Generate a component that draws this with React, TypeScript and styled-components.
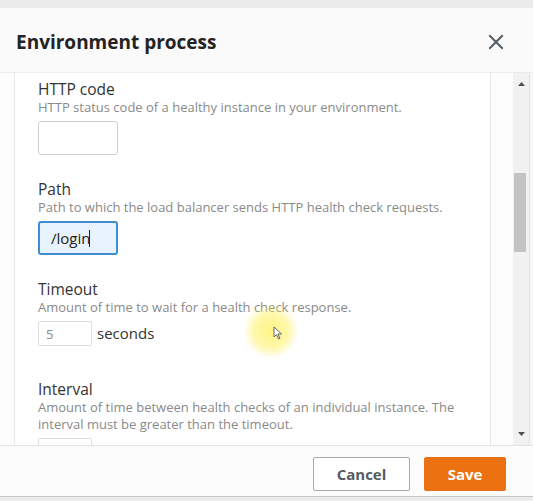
import React from "react";
import styled, { createGlobalStyle } from "styled-components";

const Global = createGlobalStyle`
  html, body { margin: 0; padding: 0; background: #ececec; }
  body { font-family: "Open Sans", "Liberation Sans", sans-serif; }
  * { box-sizing: border-box; }
`;

const Page = styled.div`
  width: 533px;
  height: 501px;
  padding-top: 8px;
  background: #ececec;
  position: relative;
  overflow: hidden;
`;

const Modal = styled.div`
  height: 489px;
  background: #ffffff;
  display: flex;
  flex-direction: column;
  border-bottom: 1px solid #c9c9c9;
`;

const Header = styled.div`
  height: 65px;
  flex: none;
  background: #fafafa;
  display: flex;
  align-items: center;
  justify-content: space-between;
  padding: 3px 28px 0 16px;
  border-bottom: 1px solid #ececec;
`;

const Title = styled.h1`
  margin: 0;
  font-size: 19px;
  font-weight: 700;
  color: #232323;
`;

const CloseButton = styled.button`
  border: none;
  background: none;
  padding: 0;
  width: 18px;
  height: 18px;
  display: flex;
  align-items: center;
  justify-content: center;
  cursor: pointer;
`;

const BodyRow = styled.div`
  flex: 1;
  display: flex;
  min-height: 0;
`;

const Gutter = styled.div<{ $w: number }>`
  width: ${(p) => p.$w}px;
  flex: none;
  background: #fdfdfd;
`;

const Panel = styled.div`
  width: 477px;
  flex: none;
  border-left: 1px solid #e8e8e8;
  border-right: 1px solid #e8e8e8;
  padding: 6px 24px 0 23px;
  overflow: hidden;
  display: flex;
  flex-direction: column;
  gap: 24px;
  background: #fff;
`;

const Field = styled.div`
  display: flex;
  flex-direction: column;
`;

const Label = styled.div`
  font-size: 15.5px;
  line-height: 20px;
  color: #333;
`;

const Desc = styled.div`
  font-size: 13px;
  line-height: 17px;
  color: #8a8a8a;
  margin-bottom: 5px;
`;

const TextInput = styled.div<{ $focused?: boolean }>`
  width: 80px;
  height: 34px;
  border-radius: 3px;
  border: ${(p) => (p.$focused ? "2px solid #3f8fd0" : "1px solid #cfcfcf")};
  background: ${(p) => (p.$focused ? "#e9f3fd" : "#fff")};
  display: flex;
  align-items: center;
  padding-left: ${(p) => (p.$focused ? "11px" : "12px")};
  font-size: 15px;
  color: #222;
`;

const Caret = styled.span`
  display: inline-block;
  width: 1px;
  height: 17px;
  background: #222;
  margin-left: -1px;
`;

const NumberRow = styled.div`
  display: flex;
  align-items: flex-start;
  height: 34px;
  gap: 5px;
`;

const NumberInput = styled.div`
  width: 54px;
  height: 25px;
  border: 1px solid #dedede;
  border-radius: 2px;
  font-size: 13px;
  color: #888;
  padding-left: 7px;
  display: flex;
  align-items: center;
`;

const Unit = styled.span`
  font-size: 15px;
  line-height: 25px;
  color: #333;
`;

const ScrollTrack = styled.div`
  width: 16px;
  flex: none;
  background: #f1f1f1;
  display: flex;
  flex-direction: column;
  align-items: center;
  padding: 8px 0 8px;
`;

const Arrow = styled.div`
  height: 6px;
  display: flex;
  align-items: center;
  justify-content: center;
  width: 100%;
`;

const Thumb = styled.div`
  width: 12px;
  height: 79px;
  background: #c3c3c3;
  margin: 86px 3px 0 1px;
  align-self: flex-start;
`;

const TrackSpacer = styled.div`
  flex: 1;
`;

const Edge = styled.div`
  flex: 1;
  background: #f7f7f7;
  border-left: 1px solid #e4e4e4;
`;

const Footer = styled.div`
  height: 51px;
  flex: none;
  border-top: 1px solid #e4e4e4;
  background: #fcfcfc;
  display: flex;
  justify-content: flex-end;
  align-items: flex-start;
  padding: 11px 27px 0 0;
  gap: 14px;
`;

const Button = styled.button<{ $primary?: boolean }>`
  height: 34px;
  width: ${(p) => (p.$primary ? "82px" : "97px")};
  border-radius: 2px;
  font-family: "Open Sans", "Liberation Sans", sans-serif;
  font-size: 15px;
  font-weight: 700;
  cursor: pointer;
  border: 1px solid ${(p) => (p.$primary ? "#e7711b" : "#a9a9a9")};
  background: ${(p) => (p.$primary ? "#ec7211" : "#ffffff")};
  color: ${(p) => (p.$primary ? "#ffffff" : "#545b64")};
`;

const Highlight = styled.div`
  position: absolute;
  left: 244px;
  top: 304px;
  width: 54px;
  height: 54px;
  border-radius: 50%;
  background: radial-gradient(circle, rgba(255, 240, 80, 0.7) 0%, rgba(255, 240, 90, 0.5) 45%, rgba(255, 245, 120, 0) 72%);
  pointer-events: none;
`;

const Pointer = styled.svg`
  position: absolute;
  left: 273px;
  top: 326px;
  pointer-events: none;
`;

export default function App() {
  return (
    <>
      <Global />
      <Page>
        <Modal>
          <Header>
            <Title>Environment process</Title>
            <CloseButton aria-label="Close">
              <svg width="16" height="16" viewBox="0 0 16 16">
                <path d="M2 2 L14 14 M14 2 L2 14" stroke="#545b64" strokeWidth="2" strokeLinecap="square" />
              </svg>
            </CloseButton>
          </Header>
          <BodyRow>
            <Gutter $w={14} />
            <Panel>
              <Field>
                <Label>HTTP code</Label>
                <Desc>HTTP status code of a healthy instance in your environment.</Desc>
                <TextInput />
              </Field>
              <Field>
                <Label>Path</Label>
                <Desc>Path to which the load balancer sends HTTP health check requests.</Desc>
                <TextInput $focused>
                  /login<Caret />
                </TextInput>
              </Field>
              <Field>
                <Label>Timeout</Label>
                <Desc>Amount of time to wait for a health check response.</Desc>
                <NumberRow>
                  <NumberInput>5</NumberInput>
                  <Unit>seconds</Unit>
                </NumberRow>
              </Field>
              <Field>
                <Label>Interval</Label>
                <Desc>
                  Amount of time between health checks of an individual instance. The interval must be greater than the timeout.
                </Desc>
                <NumberRow>
                  <NumberInput>10</NumberInput>
                  <Unit>seconds</Unit>
                </NumberRow>
              </Field>
            </Panel>
            <Gutter $w={22} />
            <ScrollTrack>
              <Arrow>
                <svg width="7" height="4" viewBox="0 0 7 4">
                  <path d="M0 4 L3.5 0 L7 4 Z" fill="#505050" />
                </svg>
              </Arrow>
              <Thumb />
              <TrackSpacer />
              <Arrow>
                <svg width="7" height="4" viewBox="0 0 7 4">
                  <path d="M0 0 L7 0 L3.5 4 Z" fill="#505050" />
                </svg>
              </Arrow>
            </ScrollTrack>
            <Edge />
          </BodyRow>
          <Footer>
            <Button>Cancel</Button>
            <Button $primary>Save</Button>
          </Footer>
        </Modal>
        <Highlight />
        <Pointer width="10" height="14" viewBox="0 0 10 14">
          <path d="M1 1 L1 11 L3.5 8.5 L5.5 13 L7 12.3 L5 8 L8.5 8 Z" fill="#ffffff" stroke="#555" strokeWidth="0.9" />
        </Pointer>
      </Page>
    </>
  );
}
